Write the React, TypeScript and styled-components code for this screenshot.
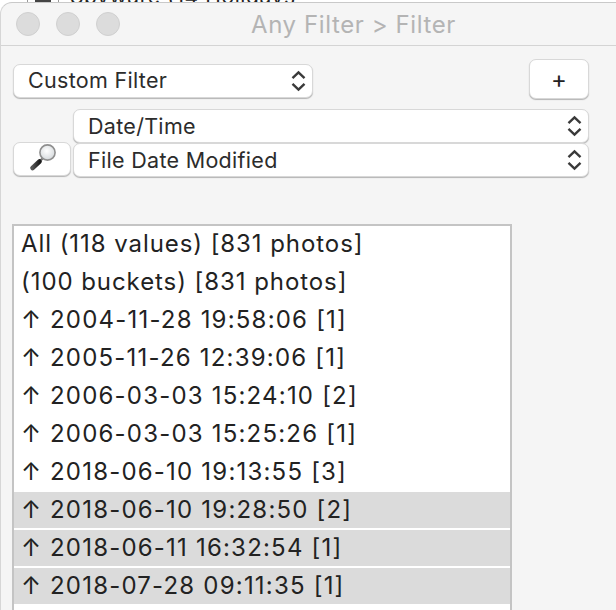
import * as React from "react";
import styled, { createGlobalStyle } from "styled-components";

const rows = [
  { text: "2004-11-28 19:58:06 [1]" },
  { text: "2005-11-26 12:39:06 [1]" },
  { text: "2006-03-03 15:24:10 [2]" },
  { text: "2006-03-03 15:25:26 [1]" },
  { text: "2018-06-10 19:13:55 [3]" },
  { text: "2018-06-10 19:28:50 [2]", selected: true },
  { text: "2018-06-11 16:32:54 [1]", selected: true },
  { text: "2018-07-28 09:11:35 [1]", selected: true },
];

const Chevrons = () => (
  <ChevronIcon viewBox="0 0 14 20" aria-hidden="true">
    <path d="M2 7.6 7 2.8 12 7.6M2 12.4 7 17.2 12 12.4" />
  </ChevronIcon>
);

const Magnifier = () => (
  <svg width="32" height="32" viewBox="0 0 32 32" aria-hidden="true">
    <defs>
      <radialGradient id="lens" cx="0.45" cy="0.4" r="0.6">
        <stop offset="0" stopColor="#ffffff" />
        <stop offset="1" stopColor="#d5d9dc" />
      </radialGradient>
      <linearGradient id="handle" x1="0" y1="0" x2="1" y2="0">
        <stop offset="0" stopColor="#555" />
        <stop offset="1" stopColor="#1c1c1c" />
      </linearGradient>
    </defs>
    <path d="M16.5 15.5 13 19" stroke="#777" strokeWidth="2.4" />
    <path d="M13.5 18.5 6.5 25" stroke="url(#handle)" strokeWidth="4.6" strokeLinecap="round" />
    <circle cx="21.5" cy="9.5" r="7.6" fill="url(#lens)" stroke="#8f8f8f" strokeWidth="1.6" />
  </svg>
);

export default function App() {
  return (
    <>
      <GlobalStyle />
      <Desktop>
        <BehindText>
          <BehindIcon />
          <span>Spyware (14 Holidays</span>
        </BehindText>
        <Window>
          <TitleBar>
            <Lights>
              <Light />
              <Light />
              <Light />
            </Lights>
            <Title>Any Filter &gt; Filter</Title>
          </TitleBar>
          <Content>
            <TopRow>
              <MainSelect>
                <span>Custom Filter</span>
                <Chevrons />
              </MainSelect>
              <PlusButton>+</PlusButton>
            </TopRow>
            <FieldRow>
              <SearchButton>
                <Magnifier />
              </SearchButton>
              <Stack>
                <Select>
                  <span>Date/Time</span>
                  <Chevrons />
                </Select>
                <Select>
                  <span>File Date Modified</span>
                  <Chevrons />
                </Select>
              </Stack>
            </FieldRow>
            <List>
              <Row>All (118 values) [831 photos]</Row>
              <Row>(100 buckets) [831 photos]</Row>
              {rows.map((row) => (
                <Row key={row.text} $selected={row.selected}>
                  <Arrow>↑</Arrow>
                  <DateText>{row.text}</DateText>
                </Row>
              ))}
            </List>
          </Content>
        </Window>
      </Desktop>
    </>
  );
}

const GlobalStyle = createGlobalStyle`
  html, body {
    margin: 0;
    padding: 0;
    background: #fff;
  }
`;

const Desktop = styled.div`
  position: relative;
  width: 616px;
  height: 610px;
  overflow: hidden;
  background: #fff;
  font-family: Inter, "Liberation Sans", sans-serif;
`;

const BehindText = styled.div`
  position: absolute;
  top: -16px;
  left: 27px;
  display: flex;
  align-items: center;
  gap: 11px;
  font-size: 21px;
  letter-spacing: 0.6px;
  color: #222;
`;

const BehindIcon = styled.div`
  width: 16px;
  height: 22px;
  padding: 0 7px;
  background: #444 content-box;
  border-left: 1px solid #999;
  border-right: 1px solid #999;
`;

const Window = styled.div`
  position: absolute;
  inset: 2px 0 0 0;
  background: #f5f5f5;
  border-top: 1px solid #c9c9c9;
  border-left: 1px solid #d6d6d6;
  border-top-left-radius: 12px;
`;

const TitleBar = styled.div`
  position: relative;
  display: flex;
  align-items: center;
  box-sizing: border-box;
  height: 43px;
  padding-left: 15px;
  border-bottom: 1px solid #d4d4d4;
`;

const Lights = styled.div`
  display: flex;
  gap: 16px;
`;

const Light = styled.div`
  width: 24px;
  height: 24px;
  border-radius: 50%;
  box-sizing: border-box;
  background: #dcdcdc;
  border: 1px solid #d0d0d0;
`;

const Title = styled.div`
  position: absolute;
  left: 90px;
  right: 0;
  text-align: center;
  font-size: 24px;
  letter-spacing: 0.6px;
  color: #b4b4b4;
`;

const Content = styled.div`
  padding: 13px 27px 0 12px;
`;

const TopRow = styled.div`
  display: flex;
  justify-content: space-between;
  align-items: flex-start;
`;

const Select = styled.div`
  display: flex;
  align-items: center;
  justify-content: space-between;
  box-sizing: border-box;
  height: 34px;
  padding: 0 5px 0 14px;
  background: #fff;
  border: 1px solid #d8d8d8;
  border-radius: 7px;
  box-shadow: 0 1px 1px #b4b4b4;
  font-size: 21.5px;
  letter-spacing: 0.3px;
  color: #2c2c2c;
`;

const MainSelect = styled(Select)`
  width: 300px;
  margin-top: 5px;
  span {
    margin-top: -2px;
  }
`;

const ChevronIcon = styled.svg`
  width: 17px;
  height: 24px;
  fill: none;
  stroke: #3a3a3a;
  stroke-width: 2;
`;

const PlusButton = styled.div`
  display: flex;
  align-items: center;
  justify-content: center;
  box-sizing: border-box;
  width: 60px;
  height: 40px;
  background: #fff;
  border: 1px solid #d8d8d8;
  border-radius: 7px;
  box-shadow: 0 1px 1px #b4b4b4;
  font-size: 24px;
  color: #222;
`;

const FieldRow = styled.div`
  display: flex;
  align-items: flex-end;
  gap: 2px;
  margin-top: 10px;
`;

const Stack = styled.div`
  flex: 1;
  display: flex;
  flex-direction: column;
`;

const SearchButton = styled.div`
  display: flex;
  align-items: center;
  justify-content: center;
  box-sizing: border-box;
  width: 58px;
  height: 34px;
  margin-bottom: 1px;
  background: #fff;
  border: 1px solid #d8d8d8;
  border-radius: 7px;
  box-shadow: 0 1px 1px #b4b4b4;
`;

const List = styled.div`
  box-sizing: border-box;
  width: 500px;
  height: 400px;
  margin: 47px 0 0 -1px;
  background: #fff;
  border: 2px solid #c4c4c4;
  border-bottom: none;
`;

const Row = styled.div<{ $selected?: boolean }>`
  display: flex;
  align-items: center;
  box-sizing: border-box;
  height: 36px;
  margin-bottom: 2px;
  padding: 0 0 2px 7px;
  background: ${(p) => (p.$selected ? "#dbdbdb" : "transparent")};
  font-size: 24px;
  letter-spacing: 0.93px;
  color: #222;
  white-space: pre;
`;

const Arrow = styled.span`
  width: 29px;
  letter-spacing: 0;
`;

const DateText = styled.span`
  letter-spacing: 1.2px;
`;
